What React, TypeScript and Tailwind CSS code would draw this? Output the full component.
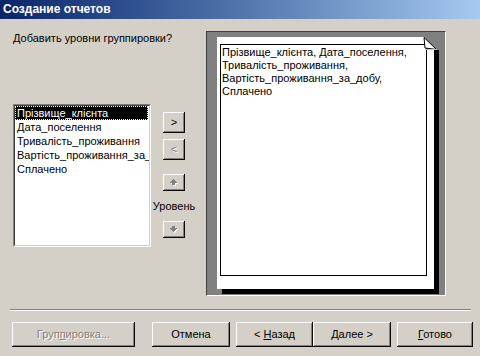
import React from 'react';

const fields = ['Прізвище_клієнта', 'Дата_поселення', 'Тривалість_проживання', 'Вартість_проживання_за_добу', 'Сплачено'];

const raised =
  'shadow-[inset_-1px_-1px_#0a0a0a,inset_1px_1px_#ffffff,inset_-2px_-2px_#808080,inset_2px_2px_#d4d0c8]';

function Arrow({ down }: { down?: boolean }) {
  // small gray arrow with white emboss, drawn pixel by pixel
  const rows = down
    ? [[2, 0, 3, 2], [0, 2, 7, 1], [1, 3, 5, 1], [2, 4, 3, 1], [3, 5, 1, 1]]
    : [[3, 0, 1, 1], [2, 1, 3, 1], [1, 2, 5, 1], [0, 3, 7, 1], [2, 4, 3, 2]];
  return (
    <svg width="9" height="8" viewBox="0 0 9 8">
      {rows.map(([x, y, w, h], i) => (
        <rect key={'w' + i} x={x + 1} y={y + 1} width={w} height={h} fill="#ffffff" />
      ))}
      {rows.map(([x, y, w, h], i) => (
        <rect key={'g' + i} x={x} y={y} width={w} height={h} fill="#808080" />
      ))}
    </svg>
  );
}

function Btn({ w, children, disabled }: { w: string; children: React.ReactNode; disabled?: boolean }) {
  return (
    <div
      className={`${w} h-[25px] flex items-center justify-center bg-[#d4d0c8] ${raised} ${
        disabled ? 'text-[#808080] [text-shadow:1px_1px_0_#ffffff]' : 'text-black'
      }`}
    >
      {children}
    </div>
  );
}

export default function App() {
  return (
    <div
      className="w-[480px] h-[356px] bg-[#d4d0c8] flex flex-col text-[11px] leading-[13px] text-black overflow-hidden"
      style={{ fontFamily: '"Liberation Sans", Arial, sans-serif' }}
    >
      {/* title bar */}
      <div className="h-[19px] shrink-0 flex items-center pl-[3px] bg-gradient-to-r from-[#0a246a] to-[#a6caf0]">
        <span className="text-white font-bold text-[12px]">Создание отчетов</span>
      </div>

      {/* main area */}
      <div className="h-[277px] shrink-0 flex pt-[12px] pl-[13px]">
        <div className="w-[138px] flex flex-col">
          <div className="mt-[1px] whitespace-nowrap">Добавить уровни группировки?</div>
          <div className="mt-[59px] h-[143px] border border-t-[#808080] border-l-[#808080] border-b-white border-r-white">
            <div className="h-full border border-t-[#404040] border-l-[#404040] border-b-[#d4d0c8] border-r-[#d4d0c8] bg-white overflow-hidden">
              {fields.map((f, i) => (
                <div
                  key={f}
                  className={`h-[14px] leading-[13px] pl-[1px] whitespace-nowrap ${
                    i === 0 ? 'bg-black text-white border border-dotted border-[#ffffc0] w-[133px]' : 'pl-[2px] pt-[1px]'
                  }`}
                >
                  {f}
                </div>
              ))}
            </div>
          </div>
        </div>

        {/* move buttons */}
        <div className="w-[46px] flex flex-col items-center">
          <div className={`mt-[81px] w-[22px] h-[21px] flex items-center justify-center ${raised}`}>&gt;</div>
          <div
            className={`mt-[6px] w-[22px] h-[21px] flex items-center justify-center text-[#808080] [text-shadow:1px_1px_0_#ffffff] ${raised}`}
          >
            &lt;
          </div>
          <div className={`mt-[14px] w-[22px] h-[17px] flex items-center justify-center ${raised}`}>
            <Arrow />
          </div>
          <div className="mt-[9px] whitespace-nowrap">Уровень</div>
          <div className={`mt-[8px] w-[22px] h-[17px] flex items-center justify-center ${raised}`}>
            <Arrow down />
          </div>
        </div>

        {/* preview */}
        <div className="ml-[9px] w-[240px] h-[265px] bg-[#808080] border border-t-[#404040] border-l-[#404040] border-b-white border-r-white pl-[10px] pt-[5px]">
          <div className="relative w-[217px] h-[252px] bg-white shadow-[5px_5px_0_#000000] pt-[7px] pl-[3px] pr-[7px] pb-[13px]">
            <div className="h-full border border-black pt-[1px] pl-[1px] whitespace-nowrap">
              <div>Прізвище_клієнта, Дата_поселення,</div>
              <div>Тривалість_проживання,</div>
              <div>Вартість_проживання_за_добу,</div>
              <div>Сплачено</div>
            </div>
            <svg className="absolute top-0 right-[-5px]" width="19" height="14" viewBox="0 0 19 14">
              <rect x="14" y="0" width="5" height="13" fill="#808080" />
              <polygon points="4,0 14,0 14,13" fill="#808080" />
              <polygon points="4,0.5 16.5,12.5 5,11" fill="#ffffff" stroke="#000000" strokeWidth="1" />
              <line x1="5" y1="12.5" x2="17" y2="12.5" stroke="#c0c0c0" strokeWidth="1" />
            </svg>
          </div>
        </div>
      </div>

      {/* separator */}
      <div className="mt-[13px] ml-[10px] w-[461px] h-[2px] border-t border-t-[#808080] border-b border-b-white" />

      {/* bottom buttons */}
      <div className="mt-[11px] pl-[12px] flex">
        <Btn w="w-[123px]" disabled>
          <span>
            Груп<span className="underline">п</span>ировка...
          </span>
        </Btn>
        <div className="ml-[17px]">
          <Btn w="w-[78px]">Отмена</Btn>
        </div>
        <div className="ml-[6px]">
          <Btn w="w-[77px]">
            <span>
              &lt; <span className="underline">Н</span>азад
            </span>
          </Btn>
        </div>
        <Btn w="w-[78px]">
          <span>
            <span className="underline">Д</span>алее &gt;
          </span>
        </Btn>
        <div className="ml-[6px]">
          <Btn w="w-[76px]">
            <span>
              <span className="underline">Г</span>отово
            </span>
          </Btn>
        </div>
      </div>
    </div>
  );
}
